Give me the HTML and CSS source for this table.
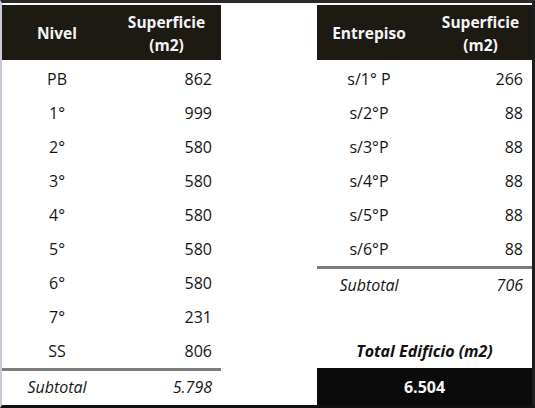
FILE: index.html
```html
<!DOCTYPE html>
<html lang="es">
<head>
<meta charset="utf-8">
<title>Superficies</title>
<link rel="stylesheet" href="styles.css">
</head>
<body>
<div class="frame">
  <div class="tbl left">
    <div class="hd"><div class="hc">Nivel</div><div class="hc">Superficie<br>(m2)</div></div>
    <div class="row"><div class="lab">PB</div><div class="val">862</div></div>
    <div class="row"><div class="lab">1°</div><div class="val">999</div></div>
    <div class="row"><div class="lab">2°</div><div class="val">580</div></div>
    <div class="row"><div class="lab">3°</div><div class="val">580</div></div>
    <div class="row"><div class="lab">4°</div><div class="val">580</div></div>
    <div class="row"><div class="lab">5°</div><div class="val">580</div></div>
    <div class="row"><div class="lab">6°</div><div class="val">580</div></div>
    <div class="row"><div class="lab">7°</div><div class="val">231</div></div>
    <div class="row"><div class="lab">SS</div><div class="val">806</div></div>
    <div class="row sub"><div class="lab">Subtotal</div><div class="val">5.798</div></div>
  </div>
  <div class="tbl right">
    <div class="hd"><div class="hc">Entrepiso</div><div class="hc shift">Superficie<br>(m2)</div></div>
    <div class="row"><div class="lab">s/1° P</div><div class="val">266</div></div>
    <div class="row"><div class="lab">s/2°P</div><div class="val">88</div></div>
    <div class="row"><div class="lab">s/3°P</div><div class="val">88</div></div>
    <div class="row"><div class="lab">s/4°P</div><div class="val">88</div></div>
    <div class="row"><div class="lab">s/5°P</div><div class="val">88</div></div>
    <div class="row"><div class="lab">s/6°P</div><div class="val">88</div></div>
    <div class="row sub"><div class="lab">Subtotal</div><div class="val">706</div></div>
    <div class="row"></div>
    <div class="row total-label">Total Edificio (m2)</div>
    <div class="total-box">6.504</div>
  </div>
</div>
</body>
</html>
```

FILE: styles.css
```css
html, body {
  margin: 0;
  padding: 0;
  background: #ffffff;
}

body {
  font-family: "Open Sans", "Noto Sans", sans-serif;
  font-size: 16px;
  color: #151515;
}

.frame {
  width: 535px;
  height: 408px;
  box-sizing: border-box;
  border-top: 3px solid #2a2a2a;
  border-left: 2px solid #c8ccd6;
  border-right: 3px solid #1e1e1e;
  border-bottom: 3px solid #111111;
  padding-top: 2px;
  display: flex;
  gap: 96px;
}

.tbl {
  display: flex;
  flex-direction: column;
}

.left { width: 219px; }
.right { width: 215px; }

.hd {
  height: 55px;
  margin-bottom: 2px;
  background: #1d1a14;
  color: #f4f4f4;
  font-size: 15.5px;
  font-weight: 700;
  display: grid;
  align-items: center;
  text-align: center;
  line-height: 23px;
}

.left .hd, .left .row { display: grid; grid-template-columns: 110px 109px; }
.right .hd, .right .row { display: grid; grid-template-columns: 104px 111px; }

.hc { padding-top: 2px; }
.shift { padding-left: 8px; }

.row {
  height: 34px;
  box-sizing: border-box;
  align-items: center;
}

.lab { text-align: center; }
.val { text-align: right; padding-right: 9px; }

.sub {
  border-top: 3px solid #7d7d7d;
  font-style: italic;
}

.right .total-label {
  display: flex;
  justify-content: center;
  font-weight: 700;
  font-style: italic;
  color: #111;
}

.total-box {
  flex: 1;
  background: #0b0b0b;
  color: #f4f4f4;
  font-weight: 700;
  display: flex;
  align-items: center;
  justify-content: center;
}
```
